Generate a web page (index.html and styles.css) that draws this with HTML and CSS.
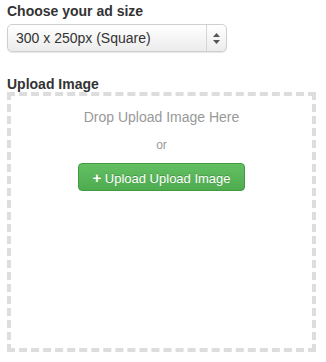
FILE: index.html
```html
<!DOCTYPE html>
<html lang="en">
<head>
    <meta charset="UTF-8">
    <title>Ad size</title>
    <link rel="stylesheet" href="styles.css">
</head>
<body>
    <div class="form">
        <label class="field-label" for="ad-size">Choose your ad size</label>
        <div class="select-wrap">
            <select id="ad-size" class="select">
                <option>300 x 250px (Square)</option>
                <option>728 x 90px (Leaderboard)</option>
                <option>160 x 600px (Skyscraper)</option>
            </select>
            <span class="select-arrows">
                <svg width="7" height="11" viewBox="0 0 7 11">
                    <path d="M3.5 0 L7 4 L0 4 Z" fill="#555"/>
                    <path d="M0 7 L7 7 L3.5 11 Z" fill="#555"/>
                </svg>
            </span>
        </div>

        <div class="field-label upload-label">Upload Image</div>
        <div class="dropzone">
            <div class="drop-text">Drop Upload Image Here</div>
            <div class="or">or</div>
            <button class="btn-upload" type="button"><span class="plus">+</span> Upload Upload Image</button>
        </div>
    </div>
</body>
</html>
```

FILE: styles.css
```css
body {
    margin: 0;
    background: #fff;
    font-family: "Liberation Sans", Arial, sans-serif;
    color: #333;
}

.form {
    padding: 3px 10px 0 7px;
}

.field-label {
    display: block;
    font-size: 14px;
    font-weight: bold;
    color: #333;
    line-height: 16px;
}

.select-wrap {
    position: relative;
    width: 220px;
    margin-top: 5px;
}

.select {
    -webkit-appearance: none;
    appearance: none;
    width: 100%;
    height: 28px;
    padding: 0 30px 0 8px;
    font-family: "Liberation Sans", Arial, sans-serif;
    font-size: 14px;
    color: #333;
    background: linear-gradient(#fff, #ececec);
    border: 1px solid #cfcfcf;
    border-radius: 5px;
    box-shadow: 0 1px 1px rgba(0,0,0,0.1);
    outline: none;
}

.select-arrows {
    position: absolute;
    top: 1px;
    right: 1px;
    bottom: 1px;
    width: 19px;
    border-left: 1px solid #d6d6d6;
    display: flex;
    align-items: center;
    justify-content: center;
    pointer-events: none;
}

.upload-label {
    margin-top: 24px;
}

.dropzone {
    margin-top: 0;
    height: 260px;
    border: 4px dashed #ddd;
    display: flex;
    flex-direction: column;
    align-items: center;
    padding-top: 12px;
    box-sizing: border-box;
}

.drop-text {
    font-size: 14px;
    color: #999;
    line-height: 18px;
}

.or {
    margin-top: 11px;
    font-size: 12px;
    color: #999;
    line-height: 16px;
}

.btn-upload {
    margin-top: 10px;
    height: 28px;
    padding: 0 13px;
    font-family: "Liberation Sans", Arial, sans-serif;
    font-size: 13px;
    color: #fff;
    background: linear-gradient(#62bf62, #4fab4f);
    border: 1px solid #419941;
    border-radius: 4px;
    text-shadow: 0 -1px 0 rgba(0,0,0,0.2);
}

.plus {
    font-weight: bold;
    font-size: 15px;
}
```
